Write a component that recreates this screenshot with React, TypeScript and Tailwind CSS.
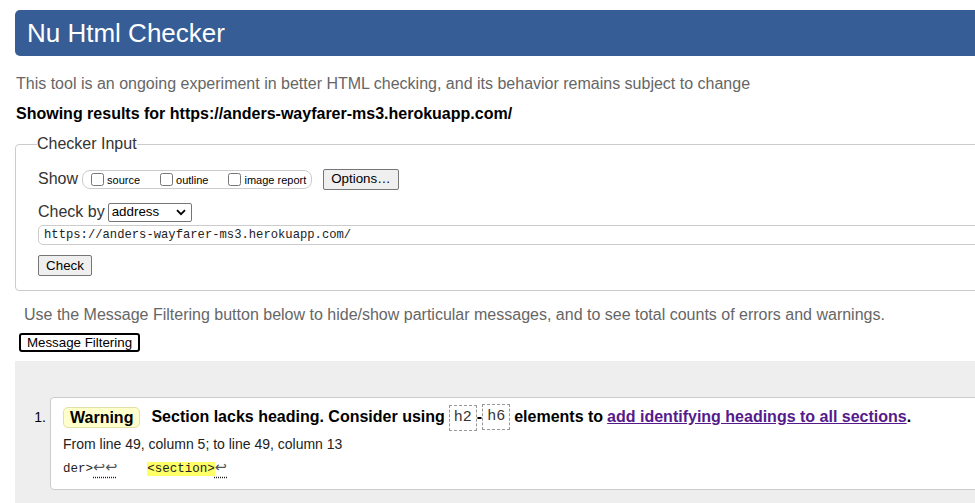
import React from "react";

const mono = "font-['Liberation_Mono','DejaVu_Sans_Mono',monospace]";

function Checkbox({ label, first }: { label: string; first?: boolean }) {
  return (
    <span className={`flex items-center ${first ? "" : "ml-[20px]"}`}>
      <input type="checkbox" className="m-0 w-[13px] h-[13px]" readOnly />
      <span className="ml-[3px] text-[11px] leading-[13px] pt-[3px]">{label}</span>
    </span>
  );
}

function Code({ children }: { children: React.ReactNode }) {
  return (
    <span
      className={`inline-block h-[26px] leading-[24px] border border-dashed border-[#999] px-[4px] text-[15px] font-normal text-[#333] ${mono}`}
    >
      {children}
    </span>
  );
}

function Lf({ children }: { children: React.ReactNode }) {
  return (
    <span className="font-['DejaVu_Sans',sans-serif] text-[14.5px] leading-none text-[#555] underline decoration-dotted decoration-[#222] underline-offset-[5px]">
      {children}
    </span>
  );
}

export default function App() {
  return (
    <div className="w-full h-[503px] overflow-hidden bg-white text-black font-['Liberation_Sans',Arial,sans-serif]">
      {/* Title bar */}
      <h1 className="mt-[10px] ml-[15px] -mr-[20px] h-[46px] bg-[#365d95] rounded-l-[5px] pl-[12px] flex items-center text-white text-[26px] leading-none font-normal">
        Nu Html Checker
      </h1>

      <p className="mt-[18px] ml-[16px] text-[16px] leading-[20px] text-[#666]">
        This tool is an ongoing experiment in better HTML checking, and its behavior remains subject to change
      </p>
      <p className="mt-[10px] ml-[16px] text-[16px] leading-[20px] font-bold">
        Showing results for https://anders-wayfarer-ms3.herokuapp.com/
      </p>

      {/* Checker input */}
      <fieldset className="mt-[10px] ml-[15px] -mr-[20px] border border-[#ccc] rounded-[4px] pl-[22px] pb-[14px]">
        <legend className="-ml-[1px] text-[16px] leading-[20px] text-[#333]">Checker Input</legend>

        <div className="mt-[14px] flex items-center h-[22px]">
          <span className="text-[16px] leading-[20px] text-[#333]">Show</span>
          <span className="ml-[4px] inline-flex items-center h-[19px] border border-[#ccc] rounded-[8px] pl-[8px] pr-[5px]">
            <Checkbox label="source" first />
            <Checkbox label="outline" />
            <Checkbox label="image report" />
          </span>
          <button
            type="button"
            className="ml-[11px] h-[21px] px-[7px] border border-[#767676] rounded-[2px] bg-[#efefef] text-[13.33px] leading-none"
          >
            Options…
          </button>
        </div>

        <div className="mt-[12px] flex items-center h-[20px]">
          <span className="text-[16px] leading-[20px] text-[#333]">Check by</span>
          <div className="ml-[3px] w-[84px] h-[19px] border border-[#767676] rounded-[2px] flex items-center justify-between pl-[3px] pr-[5px] text-[13.33px]">
            <span>address</span>
            <svg width="10" height="7" viewBox="0 0 10 7" fill="none" stroke="#000" strokeWidth="1.8">
              <path d="M1 1.2l4 4 4-4" />
            </svg>
          </div>
        </div>

        <div
          className={`mt-[3px] w-full h-[20px] border border-[#ccc] rounded-[5px] pl-[5px] flex items-center text-[12.2px] text-[#222] ${mono}`}
        >
          https://anders-wayfarer-ms3.herokuapp.com/
        </div>

        <button
          type="button"
          className="block mt-[10px] h-[21px] w-[54px] border border-[#767676] rounded-[2px] bg-[#efefef] text-[13.33px] leading-none"
        >
          Check
        </button>
      </fieldset>

      <p className="mt-[14px] ml-[24px] text-[16px] leading-[20px] text-[#666]">
        Use the Message Filtering button below to hide/show particular messages, and to see total counts of errors and warnings.
      </p>
      <button
        type="button"
        className="block mt-[8px] ml-[19px] h-[19px] w-[121px] border-2 border-black rounded-[3px] bg-white text-[13.33px] leading-none"
      >
        Message Filtering
      </button>

      {/* Results */}
      <div className="mt-[9px] ml-[15px] -mr-[20px] h-[200px] bg-[#eee] pt-[36px]">
        <div className="flex items-start">
          <span className="w-[35px] shrink-0 text-right pr-[4px] text-[14px] leading-[26px] mt-[7px]">1.</span>
          <div className="flex-1 bg-white border border-[#ccc] rounded-[4px] pt-[6px] pb-[10px] pl-[12px]">
            <div className="flex items-center h-[26px] whitespace-nowrap text-[16px] font-bold">
              <span className="h-[21px] leading-[19px] px-[6px] border border-[#e3dfa8] bg-[#ffffcc] rounded-[5px]">
                Warning
              </span>
              <span className="ml-[11px]">Section lacks heading. Consider using</span>
              <span className="ml-[4px]">
                <Code>h2</Code>
              </span>
              <span>-</span>
              <Code>h6</Code>
              <span className="ml-[4px]">elements to</span>
              <a href="#" className="ml-[4px] text-[#551a8b] underline">
                add identifying headings to all sections
              </a>
              <span>.</span>
            </div>
            <p className="mt-[5px] text-[14px] leading-[18px] text-[#222]">
              From line 49, column 5; to line 49, column 13
            </p>
            <p className={`mt-[6px] h-[20px] text-[12.5px] leading-[20px] whitespace-pre text-[#222] ${mono}`}>
              der&gt;
              <Lf>↩↩</Lf>
              {"    "}
              <mark className="bg-[#ffff66] text-[#222]">&lt;section&gt;</mark>
              <Lf>↩</Lf>
            </p>
          </div>
        </div>
      </div>
    </div>
  );
}
